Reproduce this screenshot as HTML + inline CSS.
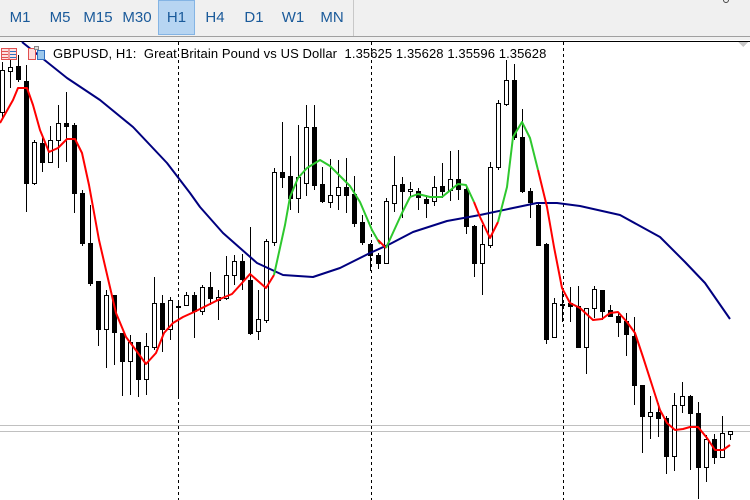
<!DOCTYPE html>
<html><head><meta charset="utf-8">
<style>
html,body{margin:0;padding:0;width:750px;height:500px;overflow:hidden;background:#fff;font-family:"Liberation Sans",sans-serif}
#tb{position:absolute;left:0;top:0;width:750px;height:36px;background:#f0f0f0;border-bottom:1px solid #a0a0a0}
#tb2{position:absolute;left:0;top:37px;width:750px;height:3px;background:#f0f0f0}
.b{position:absolute;top:0;height:34px;line-height:36px;font-size:15px;color:#1a5a9a;text-align:center;width:38px}
#h1{background:#b7d5f2;border:1px solid #84b4e4;box-sizing:border-box;height:35px;line-height:34px}
#sep{position:absolute;left:353px;top:0;width:1px;height:36px;background:#c8c8c8}
#chart{position:absolute;left:0;top:40px}
#ttl{position:absolute;left:53px;top:46px;font-size:13px;color:#000;white-space:pre;letter-spacing:0.1px}
</style></head><body>
<div id="tb">
<div class="b" style="left:1px">M1</div>
<div class="b" style="left:41px">M5</div>
<div class="b" style="left:79px">M15</div>
<div class="b" style="left:118px">M30</div>
<div class="b" id="h1" style="left:158px;width:37px">H1</div>
<div class="b" style="left:196px">H4</div>
<div class="b" style="left:235px">D1</div>
<div class="b" style="left:274px">W1</div>
<div class="b" style="left:313px">MN</div>
<div id="sep"></div>
<div style="position:absolute;left:723px;top:-3px;width:4px;height:4px;border:1px solid #444;border-radius:50%"></div>
</div>
<div id="tb2"></div>
<svg id="chart" width="750" height="460" viewBox="0 40 750 460" xmlns="http://www.w3.org/2000/svg" shape-rendering="crispEdges">
<rect x="0" y="40" width="750" height="460" fill="#fff"/>
<line x1="0" y1="41.5" x2="750" y2="41.5" stroke="#000" stroke-width="1"/>
<g stroke="#000" stroke-dasharray="3,3" stroke-width="1">
<line x1="178.5" y1="42" x2="178.5" y2="500"/><line x1="371.5" y1="42" x2="371.5" y2="500"/><line x1="563.5" y1="42" x2="563.5" y2="500"/>
</g>
<line x1="0" y1="425.5" x2="750" y2="425.5" stroke="#c0c0c0"/>
<line x1="0" y1="431.5" x2="750" y2="431.5" stroke="#c0c0c0"/>
<polygon points="738,42 748,42 743,47" fill="#c8c8c8"/>
<g id="cd"></g>
<g fill="none" stroke-width="2" shape-rendering="auto" stroke-linejoin="round">
<polyline stroke="#00007f" points="22,42 67,78 100,100 133,127 167,163 190,193 200,207 223,233 257,263 283,275 313,277 340,268 370,253 390,244 413,232 447,221 480,215 513,208 537,203 557,203 580,206 620,215 660,237 685,262 705,283 730,319"/>
<polyline stroke="#f00" points="0,123 13,100 18,88 27,88 33,105 40,130 49,152 58,148 67,139 75,139 82,153 89,185 99,240 109,283 116,313 126,337 138,353 146,364 156,353 164,333 173,323 183,317 194,312 206,306 220,299 232,294 242,283 250,274 266,288 274,275"/>
<polyline stroke="#2ec82e" points="274,275 285,225 290,197 298,178 307,168 320,160 330,166 340,176 350,186 360,202 372,230 380,244"/>
<polyline stroke="#f00" points="378,240 386,248"/>
<polyline stroke="#2ec82e" points="386,248 402,213 410,197 418,194 430,197 442,197 458,184 466,185 474,202"/>
<polyline stroke="#f00" points="474,202 480,217 490,238 498,222"/>
<polyline stroke="#2ec82e" points="498,222 507,187 513,137 522,122 530,138 538,170"/>
<polyline stroke="#f00" points="538,170 547,207 554,247 562,288 570,303 580,308 593,320 602,319 610,313 618,312 627,322 635,333 643,357 652,385 660,410 667,423 675,430 683,429 690,427 698,427 707,438 715,450 723,450 730,445"/>
</g>
<g shape-rendering="crispEdges">
<rect x="1.5" y="48.5" width="15" height="11" fill="#fde0e0" stroke="#e05050"/>
<line x1="9" y1="49" x2="9" y2="59" stroke="#e05050"/>
<line x1="10" y1="51.5" x2="16" y2="51.5" stroke="#3070c0"/><line x1="10" y1="54.5" x2="16" y2="54.5" stroke="#3070c0"/><line x1="10" y1="57.5" x2="16" y2="57.5" stroke="#3070c0"/>
<line x1="2" y1="51.5" x2="8" y2="51.5" stroke="#e05050"/><line x1="2" y1="54.5" x2="8" y2="54.5" stroke="#e05050"/><line x1="2" y1="57.5" x2="8" y2="57.5" stroke="#e05050"/>
<rect x="28.5" y="48.5" width="7" height="11" fill="#fdd" stroke="#e05050"/>
<rect x="37.5" y="50.5" width="7" height="9" fill="#9cc8ec" stroke="#3070c0"/>
<rect x="34.5" y="46.5" width="4" height="3" fill="#ddd" stroke="#888"/>
</g>
</svg>
<div id="ttl">GBPUSD, H1:  Great Britain Pound vs US Dollar  1.35625 1.35628 1.35596 1.35628</div>
<script>
var D=[[62,70,112,118,1],[60,67,71,88,1],[55,66,79,82,0],[65,81,183,212,0],[140,142,183,185,1],[138,143,162,172,0],[126,140,162,163,1],[105,123,140,168,1],[92,123,126,162,0],[123,125,193,213,0],
[190,193,243,246,0],[205,243,283,286,0],[281,281,329,346,0],[290,295,329,368,1],[295,295,332,365,0],[333,333,361,396,0],[335,342,361,395,1],[342,342,379,397,0],[333,346,379,395,1],[277,303,347,350,1],
[295,303,329,352,0],[297,300,329,340,1],[300,306,307,397,0],[292,295,305,306,1],[292,295,311,338,0],[285,287,311,315,1],[272,287,298,305,0],[290,297,300,320,1],[256,275,298,300,1],[255,261,275,285,1],
[254,261,279,290,0],[227,280,333,335,0],[290,319,331,340,1],[239,241,320,323,1],[168,172,242,246,1],[122,172,177,188,0],[156,176,198,210,0],[125,177,198,213,1],[105,127,183,196,1],[105,127,185,190,0],
[167,184,201,203,0],[159,195,202,208,1],[160,187,195,210,1],[158,187,195,213,0],[176,194,223,227,0],[215,222,242,245,0],[243,244,255,271,0],[253,255,263,269,0],[198,201,263,263,1],[156,185,203,212,1],
[177,184,191,218,0],[182,189,191,197,1],[188,191,197,210,0],[195,199,203,218,0],[176,187,201,206,1],[163,186,191,198,0],[151,179,190,201,1],[150,179,189,200,0],[185,189,226,234,0],[225,226,263,277,0],
[225,244,263,295,1],[162,167,245,248,1],[100,103,167,170,1],[60,80,104,106,1],[64,80,137,140,0],[109,137,191,193,0],[188,191,202,218,0],[203,205,245,245,0],[243,244,339,344,0],[298,303,337,338,1],
[291,304,305,322,0],[287,303,306,322,0],[286,306,347,347,0],[308,308,347,374,1],[286,289,308,318,1],[290,290,311,320,0],[305,310,316,316,0],[312,316,322,337,0],[313,321,334,356,0],[317,336,385,405,0],
[385,385,416,453,0],[396,412,416,439,1],[403,412,418,437,0],[416,418,456,474,0],[393,405,456,471,1],[382,396,405,413,1],[395,396,413,470,0],[402,413,467,499,0],[435,439,467,482,1],[434,439,457,464,0],
[416,433,457,458,1],[431,431,434,440,1]];
var s='';
for(var i=0;i<D.length;i++){var d=D[i],x=2+8*i;
s+='<line x1="'+(x+.5)+'" y1="'+d[0]+'" x2="'+(x+.5)+'" y2="'+d[3]+'" stroke="#000"/>';
var h=Math.max(d[2]-d[1],1);
if(d[4]) s+='<rect x="'+(x-1.5)+'" y="'+(d[1]+.5)+'" width="4" height="'+h+'" fill="#fff" stroke="#000"/>';
else s+='<rect x="'+(x-2)+'" y="'+d[1]+'" width="5" height="'+(h+1)+'" fill="#000"/>';}
document.getElementById('cd').innerHTML=s;
</script>
</body></html>
